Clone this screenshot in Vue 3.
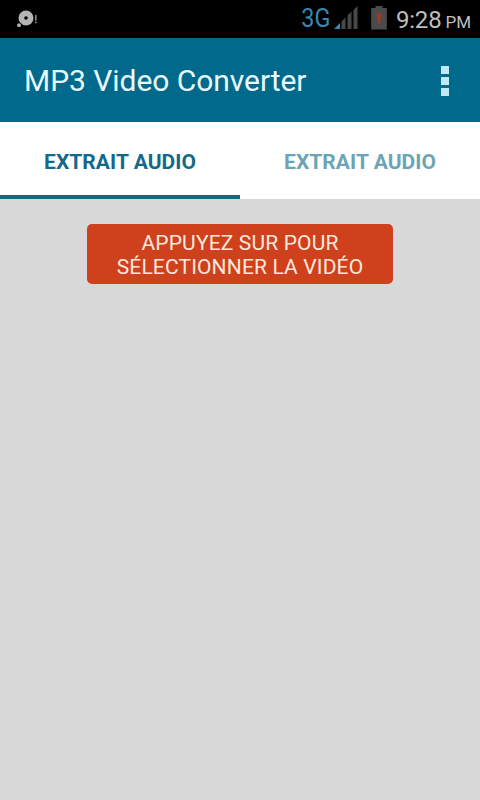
<script setup>
import { ref } from 'vue'

const tabs = ref([
	{ id: 'video', label: 'EXTRAIT AUDIO' },
	{ id: 'audio', label: 'EXTRAIT AUDIO' }
])
const activeTab = ref('video')
</script>

<template>
	<div class="screen">
		<!-- Status bar -->
		<div class="status-bar">
			<svg class="notif-icon" width="24" height="20" viewBox="0 0 24 20">
				<circle cx="10" cy="9" r="7.5" fill="#b4b4b4" />
				<circle cx="10" cy="9" r="1.8" fill="#000" />
				<circle cx="3" cy="16.2" r="2.8" fill="#000" />
				<circle cx="3" cy="16.2" r="1.9" fill="#b4b4b4" />
				<path d="M19 6h1.6v5.5H19zM19 12.5h1.6v1.7H19z" fill="#888" />
			</svg>
			<div class="status-right">
				<span class="network">3G</span>
				<svg class="signal" width="24" height="24" viewBox="0 0 24 24">
					<path d="M0 23L6 17V23z" fill="#3987b5" />
					<path d="M7.5 15.5l4-4V23h-4zM13.5 9.5l4-4V23h-4zM19.5 4L23.5 0v23h-4z" fill="#484848" />
				</svg>
				<svg class="battery" width="16" height="24" viewBox="0 0 16 24">
					<path d="M4.5 0h7v2h4.3v21.5H.2V2h4.3z" fill="#4b4b4b" />
					<path d="M5.5 7.5h5l-1.2 7H6.7zM6.7 15.3h2.6V18H6.7z" fill="#a03825" />
				</svg>
				<span class="clock">9:28</span>
				<span class="period">PM</span>
			</div>
		</div>

		<!-- App bar -->
		<header class="app-bar">
			<h1 class="title">MP3 Video Converter</h1>
			<button class="menu-btn" aria-label="Menu">
				<span v-for="n in 3" :key="n" class="dot"></span>
			</button>
		</header>

		<nav class="tabs">
			<button
				v-for="tab in tabs"
				:key="tab.id"
				class="tab"
				:class="{ active: tab.id === activeTab }"
				@click="activeTab = tab.id"
			>
				<span>{{ tab.label }}</span>
			</button>
		</nav>

		<main class="content">
			<button class="select-btn">
				<span>APPUYEZ SUR POUR<br />SÉLECTIONNER LA VIDÉO</span>
			</button>
		</main>
	</div>
</template>

<style>
body { margin: 0; background: #d8d8d8; }
</style>

<style scoped>
.screen { display: flex; flex-direction: column; width: 480px; height: 800px; overflow: hidden; background: #d8d8d8; font-family: Roboto, sans-serif; }
button { margin: 0; padding: 0; border: 0; background: none; font-family: inherit; cursor: pointer; }

/* Status bar */
.status-bar { display: flex; justify-content: space-between; flex: none; height: 38px; background: #000; white-space: nowrap; }
.notif-icon { margin: 9px 0 0 16px; }
.status-right { display: flex; align-items: flex-start; padding-right: 9px; }
.network { margin-top: 3px; font-size: 26px; line-height: 30px; color: #3987b5; transform: scaleX(0.9); transform-origin: right; }
.signal { margin: 6px 0 0 4px; }
.battery { margin: 6px 0 0 13px; }
.clock { margin: 5px 0 0 9px; font-size: 24px; line-height: 30px; letter-spacing: -0.2px; color: #bebebe; }
.period { margin: 7px 0 0 4px; font-size: 17px; line-height: 30px; color: #bebebe; }

/* App bar */
.app-bar { display: flex; align-items: center; justify-content: space-between; flex: none; height: 84px; padding: 0 27px 0 24px; box-sizing: border-box; background: #00698c; }
.title { margin: 2px 0 0; font-size: 30px; line-height: 36px; font-weight: 400; letter-spacing: -0.05px; color: #e8f8fc; white-space: nowrap; }
.menu-btn { display: flex; flex-direction: column; align-items: center; gap: 3px; width: 16px; margin-top: 2px; }
.dot { width: 8px; height: 8px; background: #c0e8f2; }

/* Tabs */
.tabs { display: flex; flex: none; height: 77px; background: #fff; }
.tab { flex: 1; padding-top: 7px; border-bottom: 4px solid transparent; font-size: 21px; font-weight: 700; letter-spacing: 0.05px; color: #6ba5b5; white-space: nowrap; }
.tab.active { color: #12698a; border-bottom-color: #1b6583; }

/* Content */
.content { display: flex; justify-content: center; align-items: flex-start; flex: 1; padding-top: 25px; }
.select-btn { width: 306px; height: 60px; padding-top: 1px; border-radius: 5px; background: #cf401c; font-size: 21px; line-height: 24px; letter-spacing: 0.15px; color: #fde9dc; white-space: nowrap; }
</style>
